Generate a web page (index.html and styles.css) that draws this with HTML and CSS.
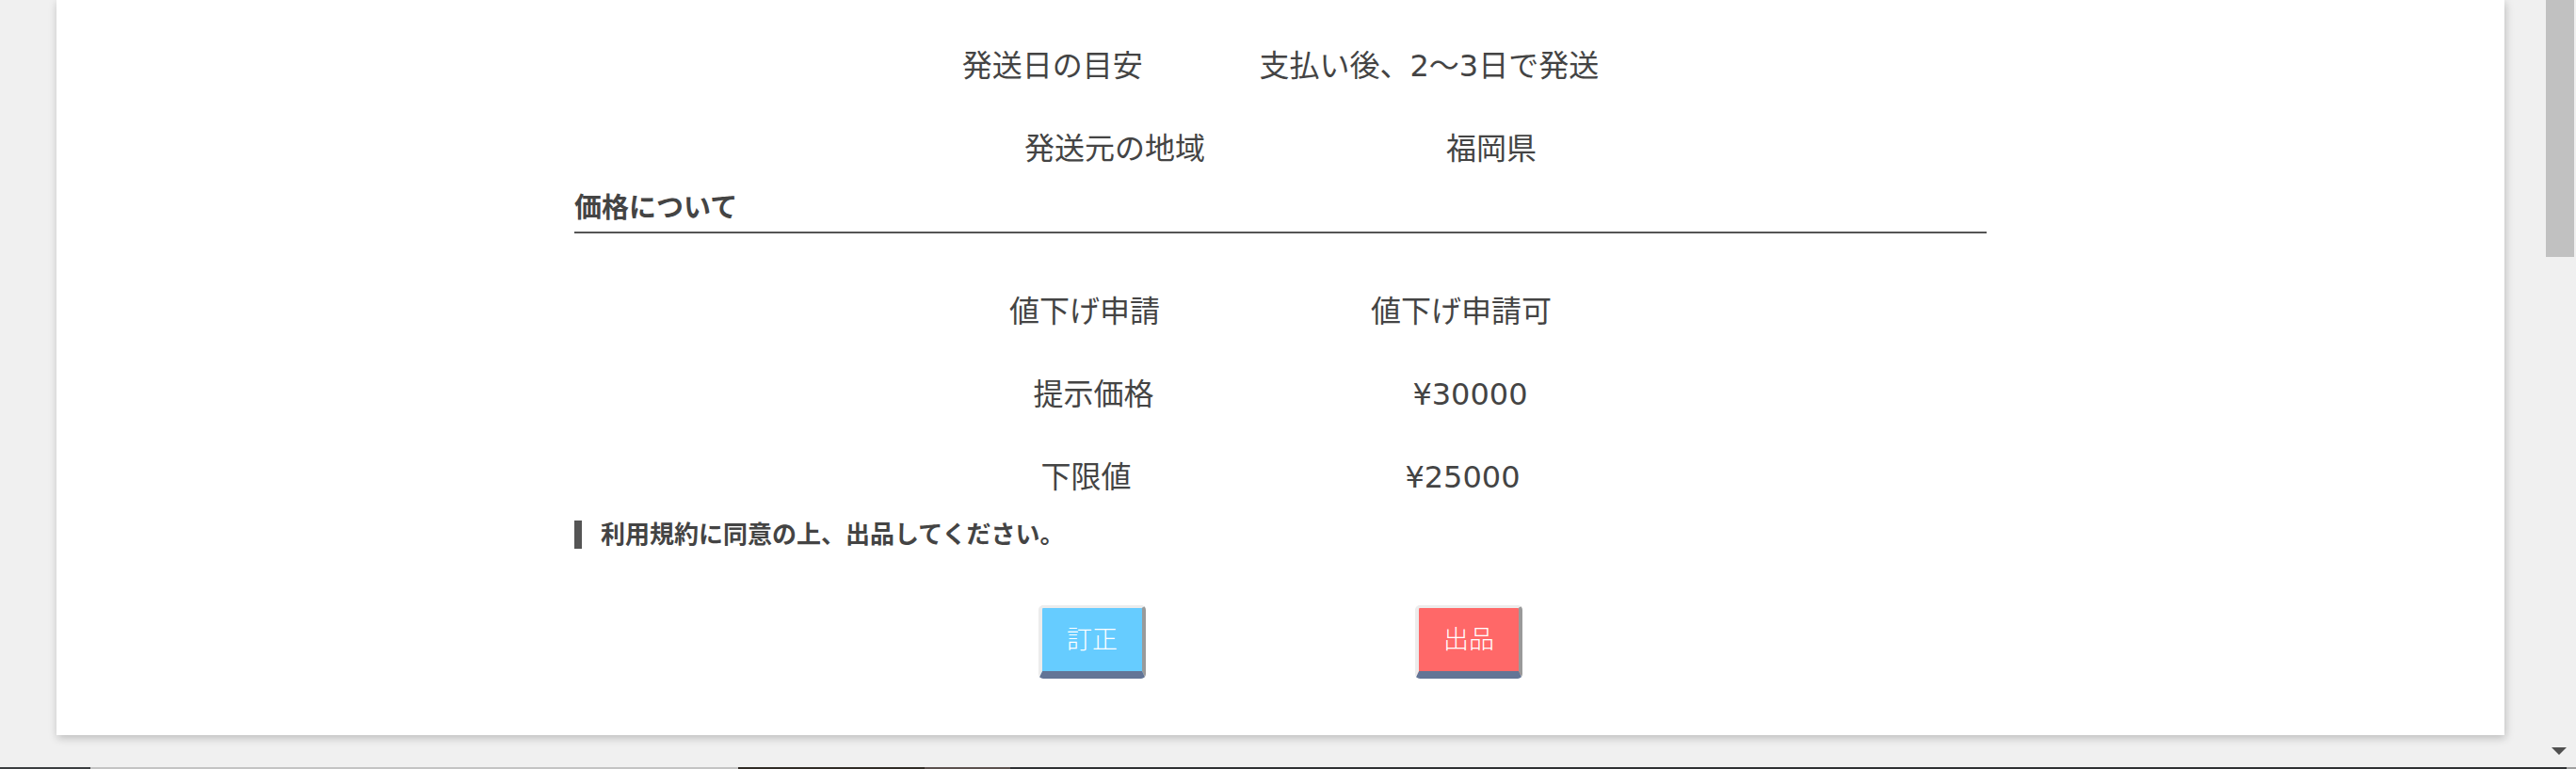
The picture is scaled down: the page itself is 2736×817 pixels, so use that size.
FILE: index.html
```html
<!DOCTYPE html>
<html lang="ja">
<head>
<meta charset="utf-8">
<title>出品確認</title>
<link rel="stylesheet" href="styles.css">
</head>
<body>
<div class="screen">
  <div class="viewport">
    <div class="card">
      <div class="content">
        <div class="pair"><span class="cell">発送日の目安</span><span class="cell">支払い後、2〜3日で発送</span></div>
        <div class="pair"><span class="cell">発送元の地域</span><span class="cell">福岡県</span></div>
        <h2 class="section-title">価格について</h2>
        <div class="price-rows">
          <div class="pair"><span class="cell">値下げ申請</span><span class="cell">値下げ申請可</span></div>
          <div class="pair"><span class="cell">提示価格</span><span class="cell">¥30000</span></div>
          <div class="pair"><span class="cell">下限値</span><span class="cell">¥25000</span></div>
        </div>
        <p class="notice">利用規約に同意の上、出品してください。</p>
        <div class="actions">
          <button class="btn btn-fix" type="button">訂正</button>
          <button class="btn btn-submit" type="button">出品</button>
        </div>
      </div>
    </div>
  </div>
  <div class="scrollbar">
    <div class="thumb"></div>
    <div class="arrow-box"><span class="arrow-down"></span></div>
  </div>
</div>
<div class="strip"></div>
</body>
</html>
```
FILE: styles.css
```css
html, body {
  margin: 0;
  height: 100%;
  overflow: hidden;
}

body {
  background: #f0f0f0;
  font-family: "DejaVu Sans", "Noto Sans CJK JP", sans-serif;
  color: #444;
}

.screen {
  display: flex;
  height: 815px;
}

.viewport {
  flex: 1;
  padding: 0 40px 0 60px;
  overflow: hidden;
}

.card {
  background: #fff;
  padding: 26px 0 60px;
  box-shadow: 1px 3px 9px rgba(0, 0, 0, 0.22);
}

.content {
  width: 1500px;
  margin: 0 auto;
}

.pair {
  display: grid;
  grid-template-columns: auto auto;
  width: 800px;
  margin: 0 auto;
  height: 88px;
  line-height: 88px;
  font-size: 32px;
  text-align: center;
  white-space: nowrap;
}

.section-title {
  margin: 0;
  font-size: 29px;
  font-weight: bold;
  line-height: 38px;
  padding-bottom: 6px;
  border-bottom: 2px solid #555;
  color: #444;
}

.price-rows {
  margin-top: 39px;
}

.notice {
  margin: 2px 0 0;
  height: 30px;
  line-height: 30px;
  border-left: 8px solid #555;
  padding-left: 20px;
  font-size: 26px;
  font-weight: bold;
  color: #444;
  white-space: nowrap;
}

.actions {
  display: grid;
  grid-template-columns: auto auto;
  width: 800px;
  margin: 60px auto 0;
  justify-items: center;
}

.btn {
  width: 114px;
  height: 78px;
  box-sizing: border-box;
  padding: 0 0 5px;
  border-style: solid;
  border-width: 3px 4px 8px 4px;
  border-color: #ececec #9a9a9a #637596 #ececec;
  border-radius: 5px;
  font-family: "Noto Sans CJK JP", sans-serif;
  font-size: 27px;
  font-weight: 300;
  color: #fff;
  display: flex;
  align-items: center;
  justify-content: center;
}

.btn-fix {
  background: #66ccff;
}

.btn-submit {
  background: #ff6868;
}

.scrollbar {
  width: 36px;
  display: flex;
  flex-direction: column;
  justify-content: space-between;
}

.thumb {
  margin-left: 4px;
  width: 30px;
  height: 273px;
  background: #c1c1c1;
}

.arrow-box {
  height: 34px;
  display: flex;
  align-items: center;
  justify-content: center;
}

.arrow-down {
  width: 0;
  height: 0;
  border-left: 8px solid transparent;
  border-right: 8px solid transparent;
  border-top: 8px solid #505050;
}

.strip {
  height: 2px;
  background: linear-gradient(to right,
    #3b3e40 0, #3b3e40 96px,
    #c3c3c3 96px, #c3c3c3 784px,
    #302b25 784px, #302b25 982px,
    #5b514e 982px, #5b514e 1073px,
    #2f3133 1073px, #2f3133 2726px,
    #a0a0a0 2726px);
}
```
